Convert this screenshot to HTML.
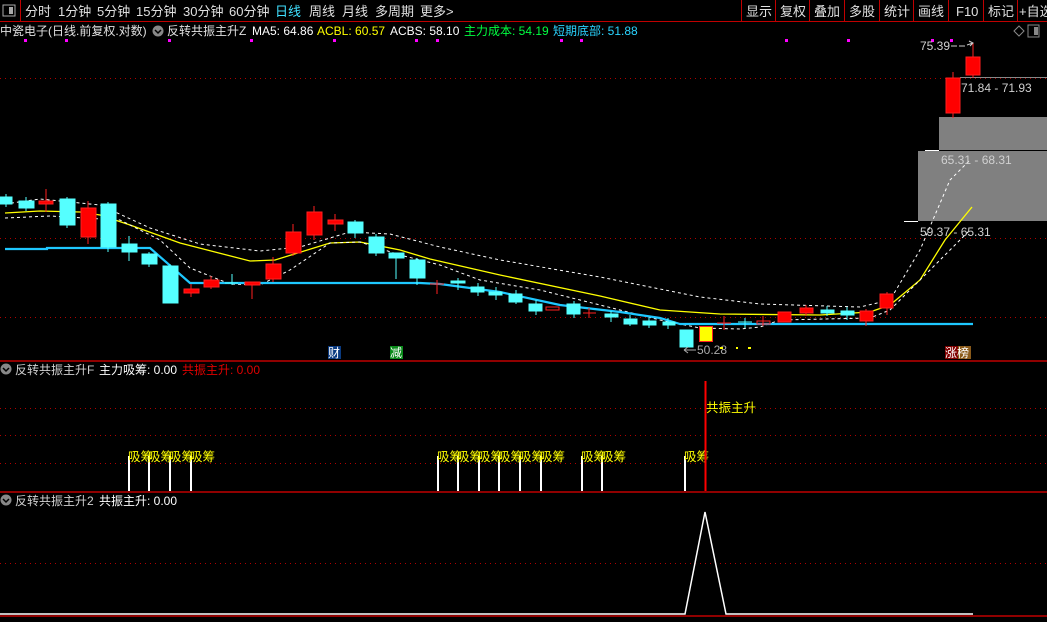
<!DOCTYPE html>
<html><head><meta charset="utf-8"><style>
body{margin:0;background:#000;width:1047px;height:617px;overflow:hidden;font-family:"Liberation Sans","Noto Sans CJK SC",sans-serif;}
svg text{font-family:"Liberation Sans","Noto Sans CJK SC",sans-serif;}
</style></head><body>
<svg width="1047" height="617" xmlns="http://www.w3.org/2000/svg">
<rect width="1047" height="617" fill="#000"/>
<rect x="0" y="0" width="1047" height="21" fill="#000"/>
<line x1="0" y1="21.5" x2="1047" y2="21.5" stroke="#c00000"/>
<line x1="20.5" y1="0" x2="20.5" y2="21" stroke="#c00000"/>
<rect x="3" y="5" width="12" height="11" fill="none" stroke="#aaa"/><rect x="9" y="7" width="4" height="7" fill="#aaa"/>
<g font-size="13" fill="#e0e0e0">
<text x="25" y="16">分时</text><text x="58" y="16">1分钟</text><text x="97" y="16">5分钟</text><text x="136" y="16">15分钟</text><text x="183" y="16">30分钟</text><text x="229" y="16">60分钟</text>
<text x="275" y="16" fill="#40e0ff">日线</text><text x="309" y="16">周线</text><text x="342" y="16">月线</text><text x="375" y="16">多周期</text><text x="420" y="16">更多</text><text x="446" y="16">&gt;</text>
</g>
<g stroke="#c00000"><line x1="741.5" y1="0" x2="741.5" y2="21"/><line x1="775.5" y1="0" x2="775.5" y2="21"/><line x1="809.5" y1="0" x2="809.5" y2="21"/><line x1="844.5" y1="0" x2="844.5" y2="21"/><line x1="879.5" y1="0" x2="879.5" y2="21"/><line x1="913.5" y1="0" x2="913.5" y2="21"/><line x1="948.5" y1="0" x2="948.5" y2="21"/><line x1="983.5" y1="0" x2="983.5" y2="21"/><line x1="1017.5" y1="0" x2="1017.5" y2="21"/></g>
<g font-size="13" fill="#e0e0e0"><text x="746" y="16">显示</text><text x="780" y="16">复权</text><text x="814" y="16">叠加</text><text x="849" y="16">多股</text><text x="884" y="16">统计</text><text x="918" y="16">画线</text><text x="956" y="16">F10</text><text x="988" y="16">标记</text><text x="1019" y="16">+自选</text></g>
<g font-size="12">
<text x="0" y="35" fill="#e0e0e0">中瓷电子(日线.前复权.对数)</text>
<circle cx="158" cy="31" r="5.5" fill="#888"/><path d="M155 30l3 3 3-3" stroke="#000" fill="none" stroke-width="1.5"/>
<text x="167" y="35" fill="#e0e0e0">反转共振主升Z</text>
<text x="252" y="35" fill="#fff">MA5: 64.86</text>
<text x="317" y="35" fill="#ffff00">ACBL: 60.57</text>
<text x="390" y="35" fill="#fff">ACBS: 58.10</text>
<text x="464" y="35" fill="#00ff40">主力成本: 54.19</text>
<text x="553" y="35" fill="#2ad4ff">短期底部: 51.88</text>
</g>
<path d="M1014 31l5-5 5 5-5 5z" fill="none" stroke="#888"/>
<rect x="1028" y="25" width="11" height="12" fill="none" stroke="#888"/><rect x="1034" y="27" width="4" height="8" fill="#888"/>
<g fill="#ff00ff"><rect x="24" y="39" width="3" height="3"/><rect x="65" y="39" width="3" height="3"/><rect x="168" y="39" width="3" height="3"/><rect x="250" y="39" width="3" height="3"/><rect x="333" y="39" width="3" height="3"/><rect x="415" y="39" width="3" height="3"/><rect x="436" y="39" width="3" height="3"/><rect x="560" y="39" width="3" height="3"/><rect x="580" y="39" width="3" height="3"/><rect x="785" y="39" width="3" height="3"/><rect x="847" y="39" width="3" height="3"/><rect x="931" y="39" width="3" height="3"/><rect x="950" y="39" width="3" height="3"/></g>
<g stroke="#b00000" stroke-dasharray="1 4"><line x1="0" y1="78.5" x2="1047" y2="78.5"/><line x1="0" y1="238.5" x2="1047" y2="238.5"/><line x1="0" y1="317.5" x2="1047" y2="317.5"/>
<line x1="0" y1="408.5" x2="1047" y2="408.5"/><line x1="0" y1="435.5" x2="1047" y2="435.5"/><line x1="0" y1="463.5" x2="1047" y2="463.5"/><line x1="0" y1="563.5" x2="1047" y2="563.5"/></g>
<rect x="939" y="117" width="108" height="33" fill="#808080"/>
<rect x="918" y="151" width="129" height="70" fill="#808080"/>
<line x1="925" y1="150.5" x2="939" y2="150.5" stroke="#fff"/><line x1="904" y1="221.5" x2="918" y2="221.5" stroke="#fff"/>
<line x1="960" y1="77.5" x2="1047" y2="77.5" stroke="#888"/>
<polyline fill="none" stroke="#ffff00" stroke-width="1.3" points="5,213 40,211 80,212 100,215 130,225 180,243 250,261 275,260 330,243 360,242 400,250 430,259 500,275 600,296 660,310 720,314 820,315 870,312 890,305 920,280 945,240 972,207"/>
<polyline fill="none" stroke="#fff" stroke-dasharray="3 3" points="5,204 40,199 100,205 150,228 200,244 260,251 300,247 350,232 390,234 440,247 500,260 600,277 700,297 760,304 860,307 890,300 920,250 950,180 970,160"/>
<polyline fill="none" stroke="#fff" stroke-dasharray="3 3" points="5,218 50,216 120,220 160,240 190,268 230,284 260,285 290,270 330,243 360,242 400,255 440,265 480,280 540,290 600,305 660,320 700,328 740,329 760,327 780,320 870,318 890,310 930,270 970,230"/>
<polyline fill="none" stroke="#1ec8ff" stroke-width="2.2" points="5,249 47,249 47,248 150,248 190,283 420,283 440,284 500,292 560,305 620,312 660,318 680,324 973,324"/>
<g>
<g stroke="#55ffff" fill="#55ffff">
<line x1="6" y1="194" x2="6" y2="207"/><rect x="0" y="197" width="12" height="7"/>
<line x1="26" y1="197" x2="26" y2="211"/><rect x="19" y="201" width="15" height="7"/>
<line x1="67" y1="197" x2="67" y2="228"/><rect x="60" y="199" width="15" height="26"/>
<line x1="108" y1="202" x2="108" y2="252"/><rect x="101" y="204" width="15" height="43"/>
<line x1="129" y1="236" x2="129" y2="261"/><rect x="122" y="244" width="15" height="8"/>
<line x1="149" y1="252" x2="149" y2="267"/><rect x="142" y="254" width="15" height="10"/>
<line x1="170" y1="264" x2="170" y2="303"/><rect x="163" y="266" width="15" height="37"/>
<line x1="232" y1="274" x2="232" y2="285"/><line x1="225" y1="283" x2="238" y2="283"/>
<line x1="355" y1="220" x2="355" y2="238"/><rect x="348" y="222" width="15" height="11"/>
<line x1="376" y1="234" x2="376" y2="256"/><rect x="369" y="237" width="15" height="16"/>
<line x1="396" y1="253" x2="396" y2="279"/><rect x="389" y="253" width="15" height="5"/>
<line x1="417" y1="258" x2="417" y2="285"/><rect x="410" y="260" width="15" height="18"/>
<line x1="458" y1="278" x2="458" y2="290"/><rect x="451" y="281" width="14" height="2"/>
<line x1="478" y1="283" x2="478" y2="296"/><rect x="471" y="287" width="13" height="5"/>
<line x1="496" y1="287" x2="496" y2="300"/><rect x="489" y="292" width="13" height="3"/>
<line x1="516" y1="290" x2="516" y2="304"/><rect x="509" y="294" width="13" height="8"/>
<line x1="536" y1="300" x2="536" y2="315"/><rect x="529" y="304" width="13" height="7"/>
<line x1="574" y1="301" x2="574" y2="318"/><rect x="567" y="304" width="13" height="10"/>
<line x1="611" y1="311" x2="611" y2="322"/><rect x="605" y="314" width="13" height="3"/>
<line x1="630" y1="315" x2="630" y2="326"/><rect x="624" y="319" width="13" height="5"/>
<line x1="649" y1="318" x2="649" y2="328"/><rect x="643" y="321" width="13" height="4"/>
<line x1="668" y1="318" x2="668" y2="329"/><rect x="663" y="322" width="12" height="3"/>
<rect x="680" y="330" width="13" height="17"/>
<line x1="745" y1="318" x2="745" y2="328"/><line x1="738" y1="322" x2="752" y2="322"/>
<rect x="821" y="310" width="13" height="3"/><line x1="827" y1="306" x2="827" y2="316"/>
<rect x="841" y="311" width="13" height="4"/><line x1="847" y1="307" x2="847" y2="320"/>
</g>
<g stroke="#ff2020" fill="#ff0000">
<line x1="46" y1="189" x2="46" y2="212"/><rect x="39" y="201" width="14" height="3"/>
<line x1="88" y1="201" x2="88" y2="244"/><rect x="81" y="208" width="15" height="29"/>
<line x1="191" y1="284" x2="191" y2="297"/><rect x="184" y="289" width="15" height="4"/>
<line x1="211" y1="276" x2="211" y2="289"/><rect x="204" y="280" width="15" height="7"/>
<line x1="252" y1="282" x2="252" y2="299"/><rect x="245" y="282" width="15" height="3"/>
<line x1="273" y1="257" x2="273" y2="282"/><rect x="266" y="264" width="15" height="15"/>
<line x1="293" y1="224" x2="293" y2="256"/><rect x="286" y="232" width="15" height="21"/>
<line x1="314" y1="206" x2="314" y2="240"/><rect x="307" y="212" width="15" height="23"/>
<line x1="335" y1="214" x2="335" y2="231"/><rect x="328" y="220" width="15" height="4"/>
<line x1="437" y1="280" x2="437" y2="294"/><line x1="430" y1="284" x2="444" y2="284"/>
<rect x="546" y="307" width="13" height="3" fill="none"/>
<line x1="589" y1="308" x2="589" y2="318"/><line x1="583" y1="313" x2="596" y2="313"/>
<line x1="724" y1="316" x2="724" y2="330"/><line x1="717" y1="323" x2="731" y2="323"/>
<line x1="763" y1="316" x2="763" y2="326"/><rect x="757" y="321" width="13" height="3" fill="none"/>
<rect x="778" y="312" width="13" height="10"/>
<line x1="806" y1="305" x2="806" y2="316"/><rect x="800" y="308" width="13" height="5"/>
<line x1="866" y1="309" x2="866" y2="326"/><rect x="860" y="311" width="13" height="10"/>
<line x1="887" y1="292" x2="887" y2="315"/><rect x="880" y="294" width="13" height="14"/>
<line x1="953" y1="72" x2="953" y2="118"/><rect x="946" y="78" width="14" height="35"/>
<line x1="973" y1="43" x2="973" y2="78"/><rect x="966" y="57" width="14" height="18"/>
</g>
<rect x="699.5" y="326.5" width="13" height="15" fill="#ffff00" stroke="#ff2020"/>
</g>
<g font-size="12" fill="#d0d0d0">
<text x="920" y="50">75.39</text><text x="961" y="92">71.84 - 71.93</text><text x="941" y="164">65.31 - 68.31</text><text x="920" y="236">59.37 - 65.31</text><text x="697" y="354" fill="#aaa">50.28</text>
</g>
<path d="M951 46h6m2 0h6m2-1l6-2m-4-2l4 2-3 3" stroke="#ccc" fill="none"/>
<path d="M684 350h12m-12 0l4-3m-4 3l4 3" stroke="#aaa" fill="none"/>
<g fill="#ffff00"><rect x="720" y="347" width="3" height="2"/><rect x="736" y="347" width="2" height="2"/><rect x="748" y="347" width="3" height="2"/></g>
<rect x="328" y="346" width="13" height="13" fill="#0a3a80"/><text x="328" y="357" font-size="12" fill="#fff">财</text>
<rect x="390" y="346" width="13" height="13" fill="#0a8a1a"/><text x="390" y="357" font-size="12" fill="#fff">减</text>
<rect x="945" y="346" width="13" height="13" fill="#800000"/><rect x="958" y="346" width="13" height="13" fill="#8a5a1a"/><text x="945" y="357" font-size="12" fill="#fff">涨榜</text>
<line x1="0" y1="361" x2="1047" y2="361" stroke="#c00000" stroke-width="1.5"/>
<circle cx="6" cy="369" r="5.5" fill="#888"/><path d="M3 368l3 3 3-3" stroke="#000" fill="none" stroke-width="1.5"/>
<g font-size="12"><text x="15" y="374" fill="#d0d0d0">反转共振主升F</text><text x="99" y="374" fill="#fff">主力吸筹: 0.00</text><text x="182" y="374" fill="#e00000">共振主升: 0.00</text></g>
<g stroke="#fff" stroke-width="2"><line x1="129" y1="456" x2="129" y2="491"/><line x1="149" y1="456" x2="149" y2="491"/><line x1="170" y1="456" x2="170" y2="491"/><line x1="191" y1="456" x2="191" y2="491"/>
<line x1="438" y1="456" x2="438" y2="491"/><line x1="458" y1="456" x2="458" y2="491"/><line x1="479" y1="456" x2="479" y2="491"/><line x1="499" y1="456" x2="499" y2="491"/><line x1="520" y1="456" x2="520" y2="491"/><line x1="541" y1="456" x2="541" y2="491"/><line x1="582" y1="456" x2="582" y2="491"/><line x1="602" y1="456" x2="602" y2="491"/><line x1="685" y1="456" x2="685" y2="491"/></g>
<g font-size="12.5" fill="#ffff00"><text x="128" y="461">吸筹</text><text x="148" y="461">吸筹</text><text x="169" y="461">吸筹</text><text x="190" y="461">吸筹</text>
<text x="437" y="461">吸筹</text><text x="457" y="461">吸筹</text><text x="478" y="461">吸筹</text><text x="498" y="461">吸筹</text><text x="519" y="461">吸筹</text><text x="540" y="461">吸筹</text><text x="581" y="461">吸筹</text><text x="601" y="461">吸筹</text><text x="684" y="461">吸筹</text>
<text x="706" y="412">共振主升</text></g>
<line x1="705.5" y1="381" x2="705.5" y2="491" stroke="#ff0000" stroke-width="2"/>
<line x1="0" y1="492" x2="1047" y2="492" stroke="#c00000" stroke-width="1.5"/>
<circle cx="6" cy="500" r="5.5" fill="#888"/><path d="M3 499l3 3 3-3" stroke="#000" fill="none" stroke-width="1.5"/>
<g font-size="12"><text x="15" y="505" fill="#d0d0d0">反转共振主升2</text><text x="99" y="505" fill="#fff">共振主升: 0.00</text></g>
<polyline fill="none" stroke="#fff" stroke-width="1.5" points="0,614 685,614 705,512 726,614 973,614"/>
<line x1="0" y1="616" x2="1047" y2="616" stroke="#c00000" stroke-width="1.5"/>
</svg>
</body></html>
